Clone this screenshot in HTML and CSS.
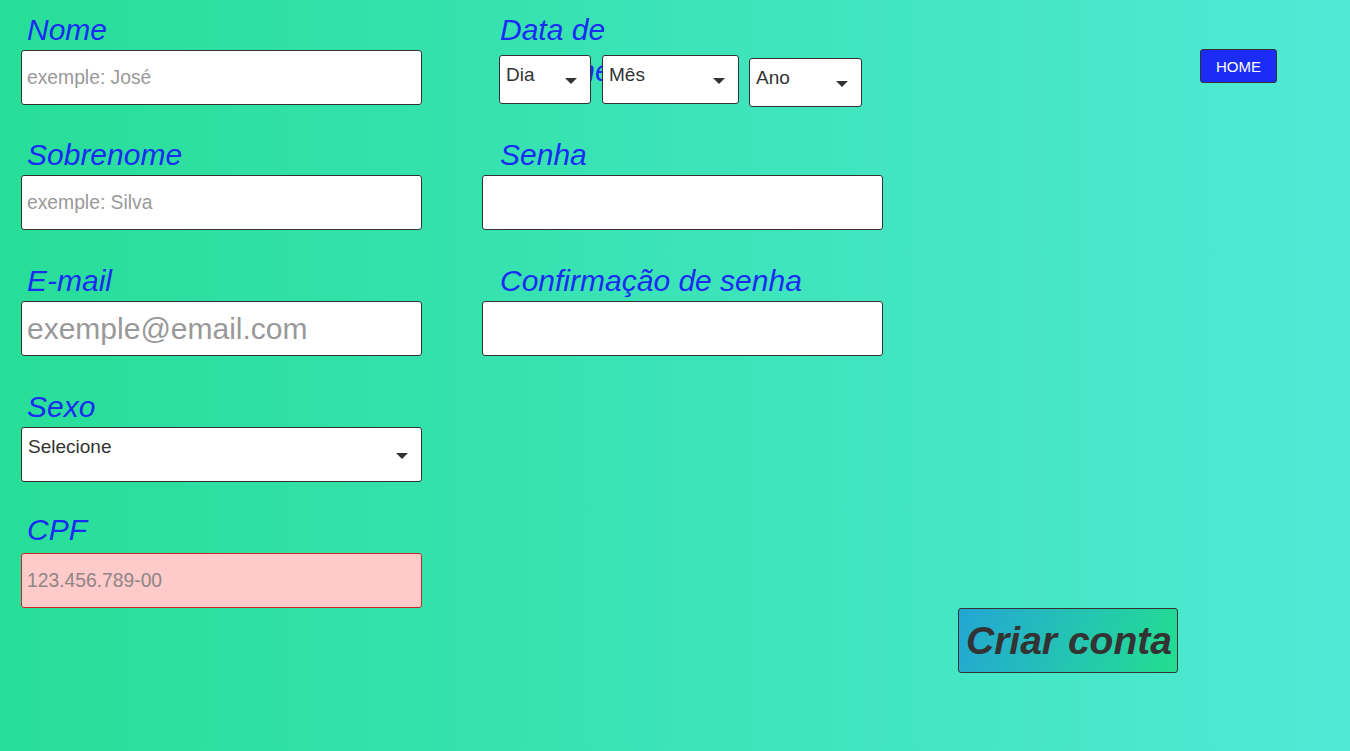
FILE: index.html
```html
<!DOCTYPE html>
<html lang="pt-BR">
<head>
<meta charset="utf-8">
<title>Criar conta</title>
<link rel="stylesheet" href="styles.css">
</head>
<body>
<form class="page">
  <div class="field field-left">
    <label class="label" for="nome">Nome</label>
    <input class="input" id="nome" type="text" placeholder="exemple: José">
  </div>
  <div class="field field-right field-date">
    <label class="label label-date" for="dia">Data de nascimento</label>
    <div class="date-row">
      <div class="select-wrap select-dia">
        <select class="select select-sm" id="dia"><option>Dia</option></select>
      </div>
      <div class="select-wrap select-mes">
        <select class="select select-sm"><option>Mês</option></select>
      </div>
      <div class="select-wrap select-ano">
        <select class="select select-sm"><option>Ano</option></select>
      </div>
    </div>
  </div>
  <div class="side-top">
    <a class="home-btn" href="#">HOME</a>
  </div>

  <div class="field field-gap field-second field-left">
    <label class="label" for="sobrenome">Sobrenome</label>
    <input class="input" id="sobrenome" type="text" placeholder="exemple: Silva">
  </div>
  <div class="field field-gap field-second field-right">
    <label class="label" for="senha">Senha</label>
    <input class="input" id="senha" type="password">
  </div>

  <div class="field field-gap field-left">
    <label class="label" for="email">E-mail</label>
    <input class="input input-large" id="email" type="email" placeholder="exemple@email.com">
  </div>
  <div class="field field-gap field-right">
    <label class="label" for="confirma">Confirmação de senha</label>
    <input class="input" id="confirma" type="password">
  </div>

  <div class="field field-gap field-left">
    <label class="label" for="sexo">Sexo</label>
    <div class="select-wrap select-sexo">
      <select class="select select-lg" id="sexo"><option>Selecione</option></select>
    </div>
  </div>

  <div class="field field-gap field-left">
    <label class="label label-cpf" for="cpf">CPF</label>
    <input class="input input-invalid" id="cpf" type="text" placeholder="123.456.789-00">
  </div>

  <div class="actions">
    <button class="submit-btn" type="submit">Criar conta</button>
  </div>
</form>
</body>
</html>
```

FILE: styles.css
```css
* {
  box-sizing: border-box;
}

html, body {
  margin: 0;
  padding: 0;
}

body {
  min-height: 100vh;
  background: linear-gradient(90deg, #27de98 0%, #50e9d6 100%);
  font-family: "Liberation Sans", Arial, sans-serif;
  color: #333;
  overflow: hidden;
}

.page {
  display: grid;
  grid-template-columns: 401px 401px 1fr;
  column-gap: 60px;
  padding: 9px 0 0 21px;
}

.field {
  display: flex;
  flex-direction: column;
  align-items: flex-start;
}

.field-gap {
  margin-top: 30px;
}

.field-second {
  margin-top: 29px;
}

.field-left {
  grid-column: 1;
}

.field-right {
  grid-column: 2;
}

.label {
  font-size: 30px;
  font-style: italic;
  line-height: 41px;
  height: 41px;
  color: #1a2cf2;
  padding-left: 6px;
  white-space: nowrap;
}

.field-right .label {
  padding-left: 18px;
}

.label-cpf {
  line-height: 36px;
  height: 36px;
  margin-bottom: 5px;
}

.input {
  width: 401px;
  height: 55px;
  border: 1px solid #333;
  border-radius: 3px;
  background: #fff;
  padding: 0 5px;
  font-family: "Liberation Sans", Arial, sans-serif;
  font-size: 19.3px;
  color: #333;
  outline: none;
}

.input::placeholder {
  color: #999;
}

.input-large {
  font-size: 30px;
}

.input-invalid {
  background: #ffcaca;
  border-color: #c62828;
}

.input-invalid::placeholder {
  color: #8e8585;
}

/* date of birth */
.field-date {
  padding-left: 17px;
}

.field-date .label-date {
  width: 170px;
  white-space: normal;
  padding-left: 1px;
}

.date-row {
  display: flex;
  align-items: flex-start;
  margin-top: 5px;
}

/* custom select */
.select-wrap {
  position: relative;
}

.select-wrap::after {
  content: "";
  position: absolute;
  right: 14px;
  top: 50%;
  margin-top: -2px;
  border-left: 6.5px solid transparent;
  border-right: 6.5px solid transparent;
  border-top: 6px solid #333;
  pointer-events: none;
}

.select {
  appearance: none;
  -webkit-appearance: none;
  width: 100%;
  border: 1px solid #333;
  border-radius: 3px;
  background: #fff;
  font-family: "Liberation Sans", Arial, sans-serif;
  font-size: 19px;
  color: #333;
  padding: 0 0 0 6px;
  outline: none;
}

.select-sm {
  height: 49px;
  padding-bottom: 11px;
}

.select-lg {
  height: 55px;
  padding-bottom: 16px;
}

.select-dia {
  width: 92px;
}

.select-mes {
  width: 137px;
  margin-left: 11px;
}

.select-ano {
  width: 113px;
  margin: 3px 0 -3px 10px;
}

.select-sexo {
  width: 401px;
}

/* side column */
.side-top {
  grid-column: 3;
  grid-row: 1;
  display: flex;
  justify-content: flex-end;
  align-items: flex-start;
  padding: 40px 73px 0 0;
}

.home-btn {
  display: inline-flex;
  align-items: center;
  justify-content: center;
  width: 77px;
  height: 34px;
  background: #1a2cf5;
  border: 1px solid #333;
  border-radius: 3px;
  color: #fff;
  font-size: 15px;
  text-decoration: none;
}

.actions {
  grid-column: 3;
  grid-row: 6;
  padding: 0 0 0 15px;
}

.submit-btn {
  width: 220px;
  height: 65px;
  border: 1px solid #333;
  border-radius: 3px;
  background: linear-gradient(110deg, #23a6d4 0%, #24c6b0 55%, #22de8e 100%);
  font-family: "Liberation Sans", Arial, sans-serif;
  font-size: 39px;
  font-weight: bold;
  font-style: italic;
  color: #333;
  padding: 0 2px 0 7px;
  text-align: left;
  white-space: nowrap;
  cursor: pointer;
}
```
